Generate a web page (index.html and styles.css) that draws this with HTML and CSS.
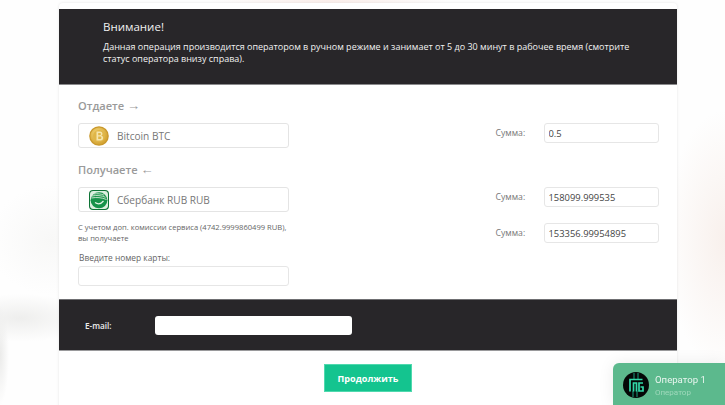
FILE: index.html
```html
<!DOCTYPE html>
<html lang="ru">
<head>
<meta charset="utf-8">
<title>Обмен</title>
<link rel="stylesheet" href="styles.css">
</head>
<body>
<main class="panel">
  <section class="notice">
    <h2>Внимание!</h2>
    <p>Данная операция производится оператором в ручном режиме и занимает от 5 до 30 минут в рабочее время (смотрите статус оператора внизу справа).</p>
  </section>
  <section class="form">
    <div class="left">
      <h3 class="head">Отдаете <span class="arrow">→</span></h3>
      <div class="select">
        <svg class="coin" viewBox="0 0 20 20"><defs><radialGradient id="g" cx="40%" cy="35%" r="70%"><stop offset="0" stop-color="#f3d77a"/><stop offset="1" stop-color="#d19f2c"/></radialGradient></defs><circle cx="10" cy="10" r="9.800" fill="#c9982c"/><circle cx="10" cy="10" r="8.600" fill="url(#g)"/><circle cx="10" cy="10" r="6" fill="#e0b648"/><path d="M7.500 5.500h3.700a2.200 2.200 0 0 1 1 4.200 2.400 2.400 0 0 1-1 4.800H7.500zM9.200 7v2.200h1.700a1.100 1.100 0 0 0 0-2.200zM9.200 10.600V13h2a1.200 1.200 0 0 0 0-2.400z" fill="#f6e6ae" fill-rule="evenodd"/></svg>
        <span>Bitcoin BTC</span>
      </div>
      <h3 class="head second">Получаете <span class="arrow">←</span></h3>
      <div class="select">
        <svg class="coin" viewBox="0 0 20 20"><rect width="20" height="20" rx="4" fill="#0d7335"/><rect x="1" y="1" width="18" height="18" rx="3.400" fill="#dcefe0"/><ellipse cx="10" cy="10.300" rx="8.400" ry="8" fill="#17924a"/><path d="M2.500 8c5-1 10-.5 15 1.500M3 6c4.500-1 9.500-.5 13.500 1.300M5 4c3.500-.6 7-.2 10 1.200" fill="none" stroke="#cfe9d3" stroke-width=".9"/><path d="M6 12.500c3 2 6 1.500 8.500-1.500" fill="none" stroke="#e6f3e6" stroke-width="1.200"/></svg>
        <span>Сбербанк RUB RUB</span>
      </div>
      <p class="note">С учетом доп. комиссии сервиса (4742.9999860499 RUB), вы получаете</p>
      <label class="card-label" for="card">Введите номер карты:</label>
      <input class="field wide" id="card" type="text">
    </div>
    <div class="right">
      <div class="sum first"><label>Сумма:</label><input class="field" type="text" value="0.5"></div>
      <div class="sum mid"><label>Сумма:</label><input class="field" type="text" value="158099.999535"></div>
      <div class="sum last"><label>Сумма:</label><input class="field" type="text" value="153356.99954895"></div>
    </div>
  </section>
  <section class="mail">
    <label for="mail">E-mail:</label>
    <input id="mail" type="text">
  </section>
  <div class="actions"><button type="button">Продолжить</button></div>
</main>
<aside class="chat">
  <svg class="avatar" viewBox="0 0 26 26"><circle cx="13" cy="13" r="13" fill="#050807"/><path d="M11 1v6M15 1v6M10 19v6M14 19v6" stroke="#14856a" stroke-width="1.200"/><path d="M7 19.500V7.500h12.500M10.500 19.500V11h3v8.500M20 11h-4v8h4v-4h-2.500" fill="none" stroke="#33d9a8" stroke-width="1.700"/></svg>
  <div class="who"><b>Оператор 1</b><small>Оператор</small></div>
</aside>
</body>
</html>
```
FILE: styles.css
```css
* { box-sizing: border-box; }
html, body { height: 100%; }
body {
  margin: 0;
  height: 405px;
  overflow: hidden;
  font-family: "Open Sans", "Noto Sans", sans-serif;
  background:
    radial-gradient(ellipse 120px 12px at 330px 0, #fbeeea 0, rgba(251,238,234,0) 100%),
    radial-gradient(ellipse 60px 130px at 725px 240px, #f8f0ec 0, rgba(248,240,236,0) 100%),
    radial-gradient(ellipse 70px 24px at 20px 318px, #eeeeed 0, rgba(238,238,237,0) 100%),
    radial-gradient(ellipse 9px 50px at 0 355px, #ebebea 0, rgba(235,235,234,0) 100%),
    radial-gradient(ellipse 60px 55px at 50px 240px, #f8f8f7 0, rgba(248,248,247,0) 100%),
    #fefefe;
}
.panel {
  width: 618px;
  margin-left: 59px;
  padding-top: 6px;
  position: relative;
  top: 3px;
  background: #fff;
  border-radius: 4px 4px 0 0;
  box-shadow: 0 0 3px rgba(0,0,0,.1);
}
.notice {
  height: 76px;
  padding: 10px 44px 0;
  background: #282629;
  color: #f1f1f1;
  border-bottom: 1px solid #8a8a8c;
}
.notice h2 { margin: 0 0 6px; font-size: 11.500px; line-height: 16px; font-weight: 400; }
.notice p { margin: 0; font-size: 9px; line-height: 12px; }
.form { display: flex; justify-content: space-between; padding: 13px 18.500px 0 19px; height: 214px; }
.left { width: 211px; display: flex; flex-direction: column; }
.head { margin: 0; font-size: 11.100px; line-height: 16px; font-weight: 600; color: #9a9a9a; }
.arrow { font-family: "Liberation Sans", sans-serif; font-weight: 400; font-size: 13px; line-height: 16px; }
.head.second { margin-top: 14px; }
.select {
  height: 25px;
  margin-top: 9px;
  padding-left: 10px;
  display: flex;
  align-items: center;
  gap: 8px;
  border: 1px solid #e4e4e4;
  border-radius: 3px;
  font-size: 10.100px;
  color: #777;
}
.coin { width: 20px; height: 20px; flex: none; }
.note { margin: 10px 0 0; font-size: 7.600px; line-height: 11px; color: #666; }
.card-label { margin: 7px 0 0 1px; font-size: 8.400px; line-height: 14px; color: #666; }
.field { height: 20px; width: 115px; padding: 0 4px; border: 1px solid #e6e6e6; border-radius: 3px; font: 9.400px "Open Sans", sans-serif; color: #444; background: #fff; outline: 0; }
.wide { width: 211px; margin-top: 1px; }
.right { width: 163px; padding-top: 25px; }
.sum { display: flex; justify-content: space-between; align-items: center; font-size: 8.700px; color: #777; }
.mid { margin-top: 44px; }
.last { margin-top: 16px; }
.mail { height: 52px; padding-left: 26px; display: flex; align-items: center; background: #282629; border-top: 1px solid #6f6f72; border-bottom: 1px solid #9a9a9c; }
.mail label { width: 69.500px; font-size: 8.200px; font-weight: 600; color: #eee; }
.mail input { width: 197px; height: 19px; border: 0; border-radius: 3px; background: #fff; outline: 0; }
.actions { padding-top: 13px; height: 60px; display: flex; justify-content: center; }
.actions button { width: 88px; height: 28px; padding: 0; border: 1px solid #4fd9ae; background: #14c48f; color: #fff; font: 700 9.100px "Open Sans", sans-serif; }
.chat { position: fixed; left: 613px; top: 363px; width: 112px; height: 42px; padding: 9px 0 0 10px; display: flex; gap: 6px; background: #5cb98d; border-radius: 6px 0 0 0; box-shadow: 0 0 16px rgba(0,0,0,.08); }
.avatar { width: 26px; height: 26px; flex: none; }
.who { display: flex; flex-direction: column; padding-top: 1px; }
.who b { font: 400 9.600px/13px "Roboto", sans-serif; color: #e9f5ef; }
.who small { font: 400 8px/13px "Roboto", sans-serif; color: #9fd8bb; }
```
